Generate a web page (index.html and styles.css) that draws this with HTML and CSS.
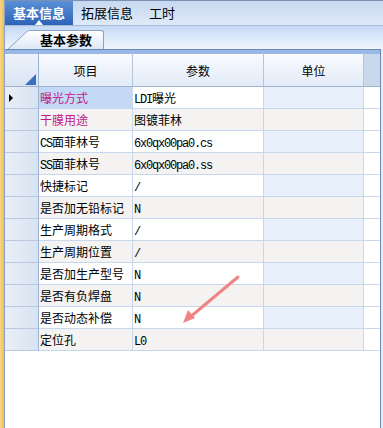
FILE: index.html
```html
<!DOCTYPE html>
<html lang="zh-CN">
<head>
  <meta charset="UTF-8" />
  <title>基本信息</title>
  <link rel="stylesheet" href="styles.css">
</head>
<body>

<div class="app">
  <div class="edge"></div>
  <div class="main">
    <div class="tabbar">
      <div class="tab active">基本信息</div>
      <div class="tab">拓展信息</div>
      <div class="tab">工时</div>
    </div>

    <div class="subbar">
      <div class="subtab">
        <svg class="subtab-slant" width="22" height="19" viewBox="0 0 22 19">
          <defs>
            <linearGradient id="tabfill" x1="0" y1="0" x2="0" y2="1">
              <stop offset="0" stop-color="#ffffff"/>
              <stop offset="1" stop-color="#dce8f8"/>
            </linearGradient>
          </defs>
          <path d="M0,19 L19,1.5 Q20.5,0.5 22,0.5 L22,19 Z" fill="url(#tabfill)"/>
          <path d="M0,19 L19,1.5 Q20.5,0.5 22,0.5" fill="none" stroke="#8ca2c3" stroke-width="1"/>
        </svg>
        <div class="subtab-body">基本参数</div>
      </div>
    </div>

    <div class="grid">
      <table class="params">
        <thead>
          <tr>
            <th class="corner"><span class="corner-mark"></span></th>
            <th class="col-name">项目</th>
            <th class="col-value">参数</th>
            <th class="col-unit">单位</th>
            <th class="filler"></th>
          </tr>
        </thead>
        <tbody>
          <tr>
            <td class="rowhead"><span class="current"></span></td>
            <td class="name hl selected">曝光方式</td>
            <td class="value"><span class="en">LDI</span>曝光</td>
            <td class="unit"></td>
            <td class="filler"></td>
          </tr>
          <tr>
            <td class="rowhead"></td>
            <td class="name hl">干膜用途</td>
            <td class="value">图镀菲林</td>
            <td class="unit"></td>
            <td class="filler"></td>
          </tr>
          <tr>
            <td class="rowhead"></td>
            <td class="name"><span class="en">CS</span>面菲林号</td>
            <td class="value"><span class="en">6x0qx00pa0.cs</span></td>
            <td class="unit"></td>
            <td class="filler"></td>
          </tr>
          <tr>
            <td class="rowhead"></td>
            <td class="name"><span class="en">SS</span>面菲林号</td>
            <td class="value"><span class="en">6x0qx00pa0.ss</span></td>
            <td class="unit"></td>
            <td class="filler"></td>
          </tr>
          <tr>
            <td class="rowhead"></td>
            <td class="name">快捷标记</td>
            <td class="value"><span class="en">/</span></td>
            <td class="unit"></td>
            <td class="filler"></td>
          </tr>
          <tr>
            <td class="rowhead"></td>
            <td class="name">是否加无铅标记</td>
            <td class="value"><span class="en">N</span></td>
            <td class="unit"></td>
            <td class="filler"></td>
          </tr>
          <tr>
            <td class="rowhead"></td>
            <td class="name">生产周期格式</td>
            <td class="value"><span class="en">/</span></td>
            <td class="unit"></td>
            <td class="filler"></td>
          </tr>
          <tr>
            <td class="rowhead"></td>
            <td class="name">生产周期位置</td>
            <td class="value"><span class="en">/</span></td>
            <td class="unit"></td>
            <td class="filler"></td>
          </tr>
          <tr>
            <td class="rowhead"></td>
            <td class="name">是否加生产型号</td>
            <td class="value"><span class="en">N</span></td>
            <td class="unit"></td>
            <td class="filler"></td>
          </tr>
          <tr>
            <td class="rowhead"></td>
            <td class="name">是否有负焊盘</td>
            <td class="value"><span class="en">N</span></td>
            <td class="unit"></td>
            <td class="filler"></td>
          </tr>
          <tr>
            <td class="rowhead"></td>
            <td class="name">是否动态补偿</td>
            <td class="value"><span class="en">N</span></td>
            <td class="unit"></td>
            <td class="filler"></td>
          </tr>
          <tr>
            <td class="rowhead"></td>
            <td class="name">定位孔</td>
            <td class="value"><span class="en">L0</span></td>
            <td class="unit"></td>
            <td class="filler"></td>
          </tr>
        </tbody>
      </table>
    </div>
  </div>

  <!-- annotation arrow drawn over the grid -->
  <svg class="arrow" width="62" height="56" viewBox="0 0 62 56">
    <line x1="58" y1="5" x2="9" y2="46" stroke="#f08484" stroke-width="3" stroke-linecap="round"/>
    <polygon points="3,51 8,38 15,46" fill="#f08484"/>
  </svg>
</div>

</body>
</html>
```

FILE: styles.css
```css
* {
  box-sizing: border-box;
}

body {
  margin: 0;
  font-family: "Noto Sans CJK SC", sans-serif;
  font-size: 12px;
  color: #000;
  background: #fff;
}

.app {
  position: relative;
  display: flex;
  width: 383px;
  height: 428px;
  overflow: hidden;
}

.edge {
  width: 4px;
  background: linear-gradient(to right, #fbd783, #efbd57);
}

.main {
  flex: 1;
  display: flex;
  flex-direction: column;
  border-left: 1px solid #8fa4c4;
  background: #e6edf6;
}

/* top tabs */
.tabbar {
  display: flex;
  height: 26px;
  border-top: 1px solid #7b91b2;
  border-bottom: 1px solid #a7bad4;
  background: linear-gradient(#c6d8f0, #dfeaf8);
}

.tab {
  padding: 0 8px;
  line-height: 24px;
  font-size: 13px;
}

.tab.active {
  position: relative;
  color: #fff;
  font-weight: bold;
  background: linear-gradient(#5b8fd8, #2d64b8);
}

.tab.active::after {
  content: "";
  position: absolute;
  left: 50%;
  bottom: 0;
  margin-left: -4px;
  border-left: 4px solid transparent;
  border-right: 4px solid transparent;
  border-bottom: 5px solid #fff;
}

/* sub tabs */
.subbar {
  display: flex;
  align-items: flex-end;
  height: 23px;
  padding-left: 3px;
  background: linear-gradient(#c5daf6, #f0f6fe);
}

.subtab {
  display: flex;
  height: 19px;
}

.subtab-slant {
  display: block;
}

.subtab-body {
  padding: 0 11px 0 10px;
  border-top: 1px solid #8ca2c3;
  border-right: 1px solid #8ca2c3;
  border-top-right-radius: 3px;
  background: linear-gradient(#ffffff, #dce8f8);
  font-size: 13px;
  font-weight: bold;
  line-height: 18px;
}

/* parameter grid */
.grid {
  flex: 1;
  margin-right: 2px;
  border-top: 1px solid #6888ba;
  border-right: 1px solid #6a88b8;
  background: #fff;
}

.params {
  width: 375px;
  table-layout: fixed;
  border-collapse: separate;
  border-spacing: 0;
}

.params th {
  height: 37px;
  padding: 0;
  border-top: 4px solid #9ab8e5;
  border-right: 1px solid #b4c5dc;
  border-bottom: 1px solid #a0b4d0;
  background: linear-gradient(#f9fbfe, #e2ebf7);
  font-weight: normal;
  text-align: center;
  vertical-align: middle;
}

.params th.corner {
  width: 34px;
  position: relative;
  border-right-color: #9db4d6;
  background: linear-gradient(#eef3fa, #d9e4f3);
}

.params th.col-name {
  width: 94px;
}

.params th.col-value {
  width: 131px;
}

.params th.col-unit {
  width: 100px;
}

.params th.filler {
  width: 16px;
  border-right: 0;
  background: #cad8eb;
}

.corner-mark {
  position: absolute;
  right: 2px;
  bottom: 1px;
  width: 0;
  height: 0;
  border-left: 11px solid transparent;
  border-bottom: 11px solid #3a6fc2;
}

.params td {
  height: 22px;
  padding: 0 1px;
  border-right: 1px solid #c7d7ee;
  border-bottom: 1px solid #c7d7ee;
  white-space: nowrap;
  overflow: hidden;
  vertical-align: middle;
  background: #fff;
}

.params td.rowhead {
  position: relative;
  border-right-color: #9db4d6;
  border-bottom-color: #b7c8e0;
  background: linear-gradient(to right, #e9eff8, #d8e3f2);
}

.params td.unit {
  background: #e8f0fb;
}

.params tr:nth-child(even) td.name,
.params tr:nth-child(even) td.value,
.params tr:nth-child(even) td.unit {
  background: #f4f3f1;
}

.params td.filler {
  border-right: 0;
  background: #fff;
}

.params td.selected {
  background: #c3d9f5;
}

.hl {
  color: #c2188b;
}

.en {
  font-family: "Liberation Mono", monospace;
  font-size: 12px;
  letter-spacing: -1.2px;
}

.current {
  position: absolute;
  left: 4px;
  top: 7px;
  width: 0;
  height: 0;
  border-top: 4px solid transparent;
  border-bottom: 4px solid transparent;
  border-left: 4px solid #000;
}

.arrow {
  position: absolute;
  left: 180px;
  top: 272px;
}
```
